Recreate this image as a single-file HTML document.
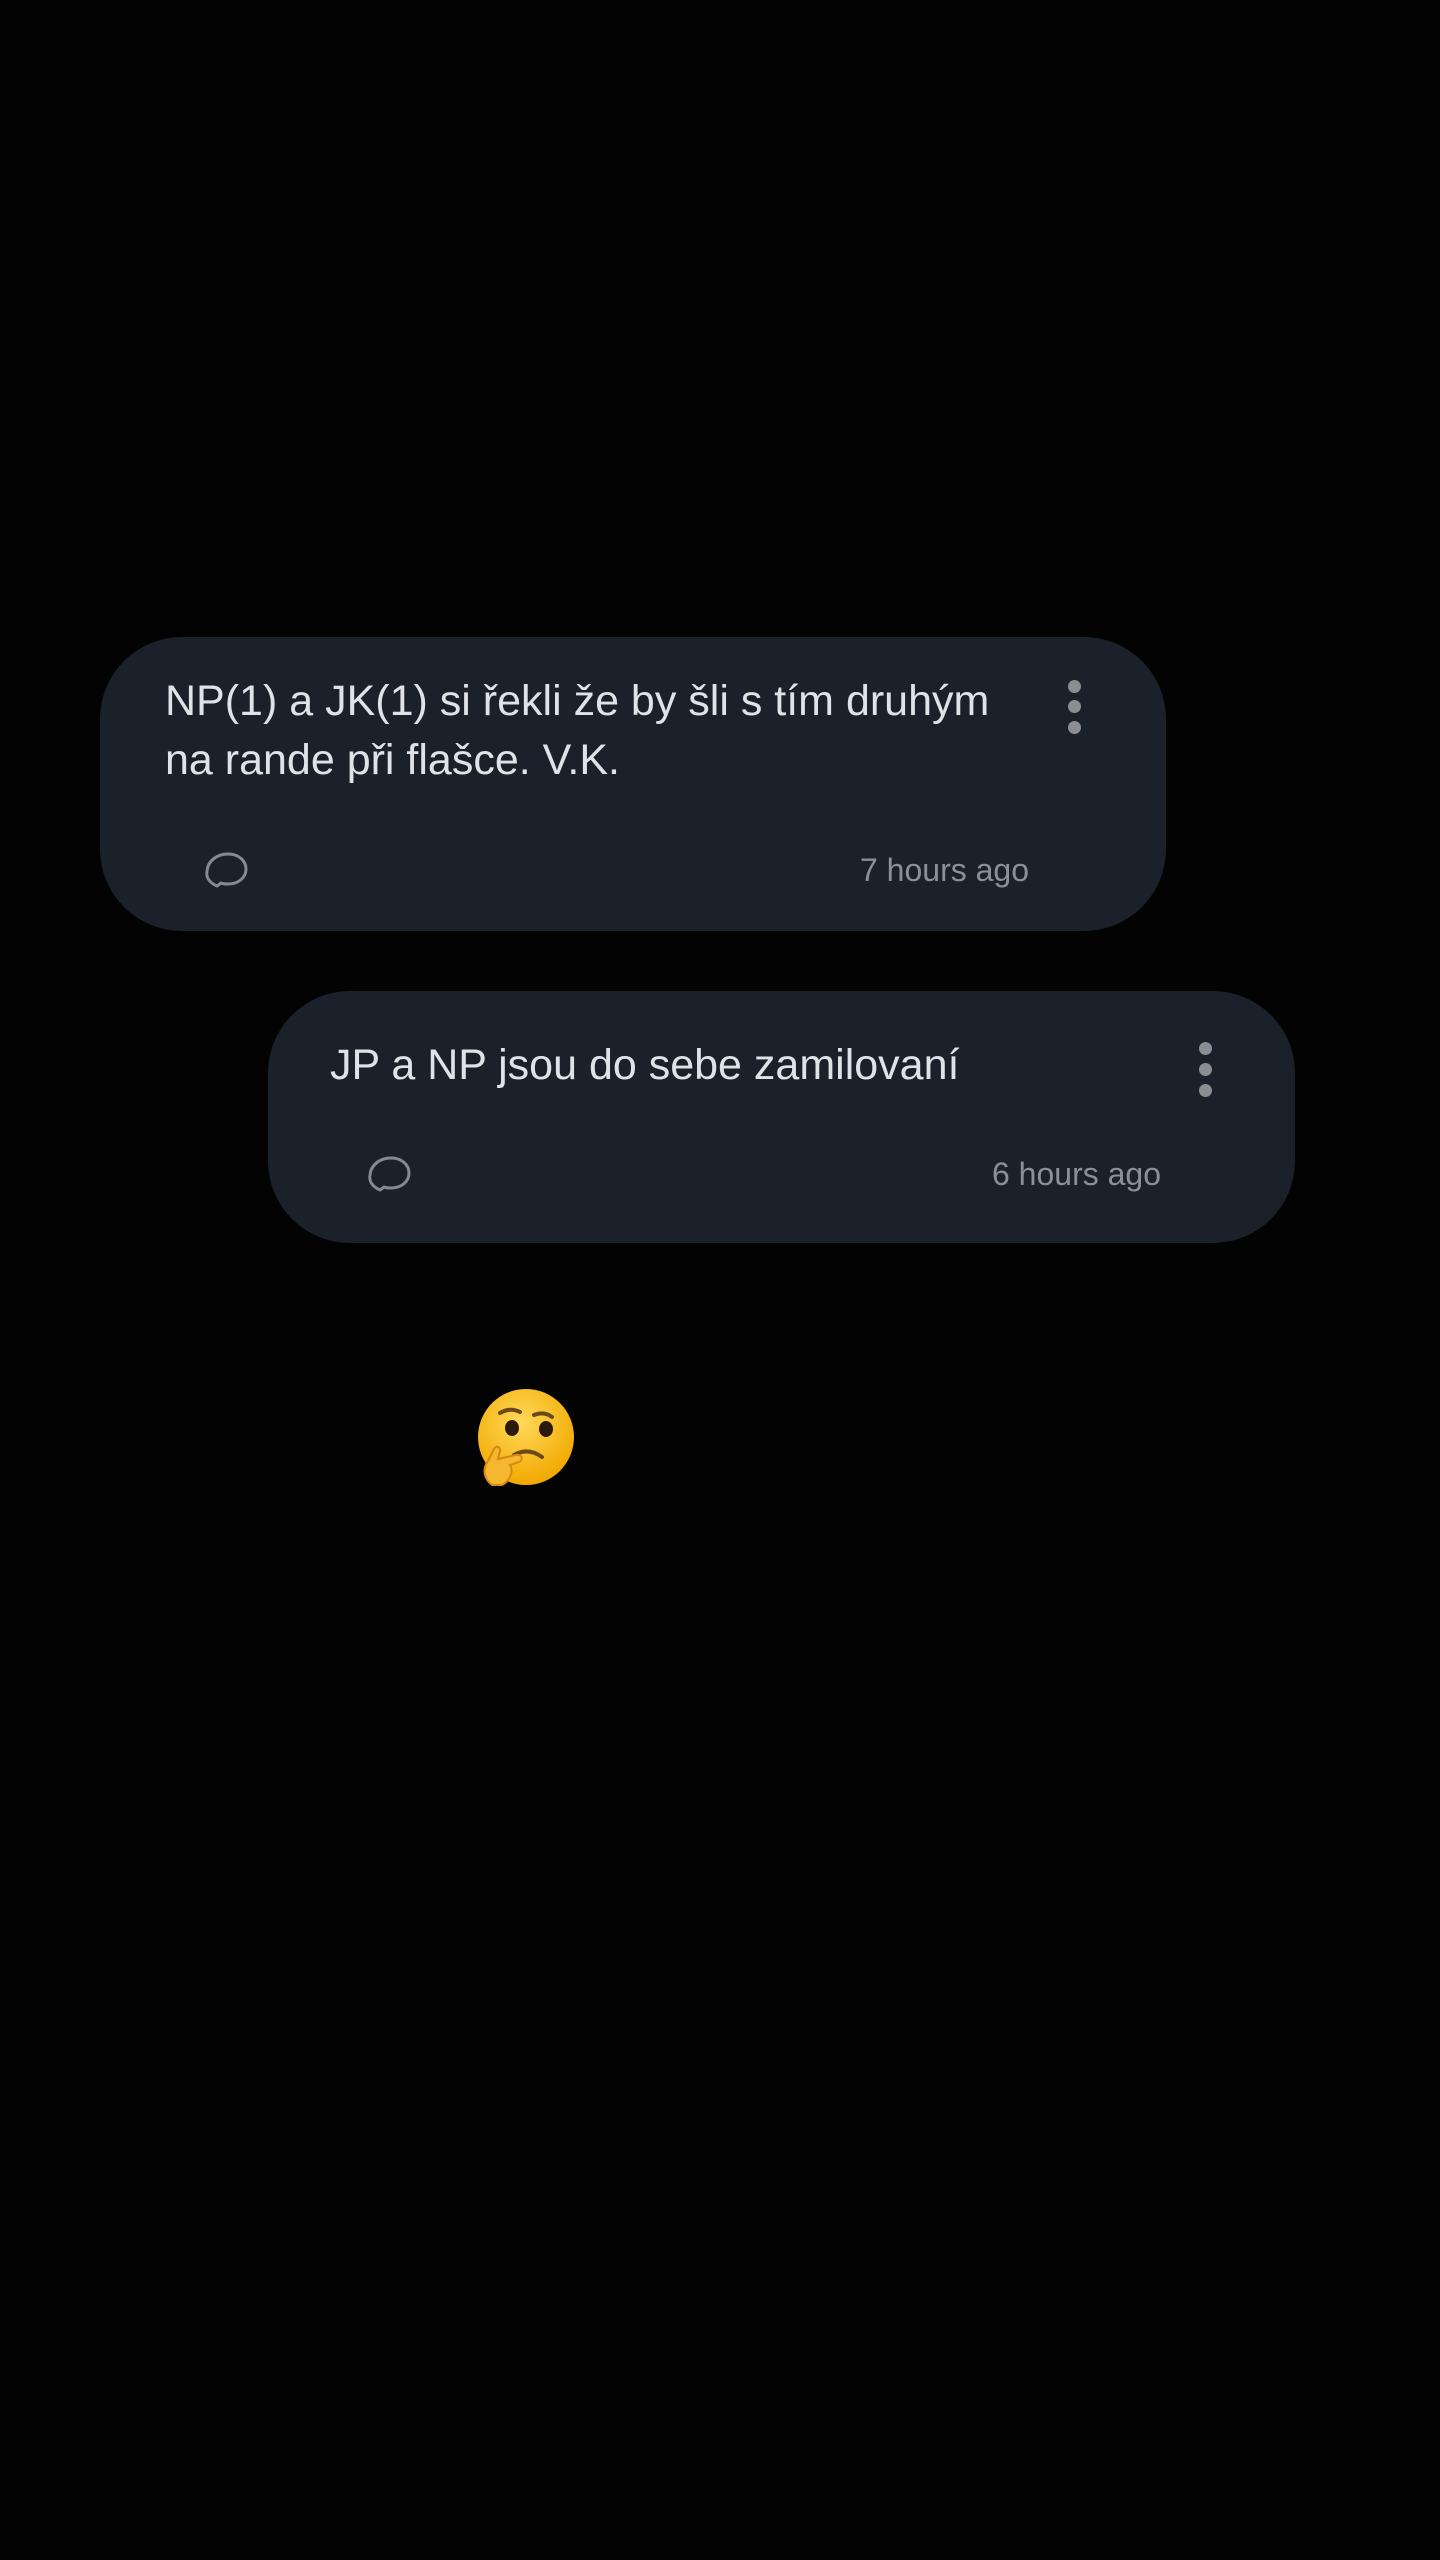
<!DOCTYPE html>
<html><head><meta charset="utf-8">
<style>
html,body{margin:0;padding:0;background:#030303;}
body{width:1440px;height:2560px;position:relative;overflow:hidden;font-family:"Liberation Sans",sans-serif;}
.card{position:absolute;background:#1b212b;border-radius:82px;}
.t{position:absolute;color:#dfe2e6;font-size:43px;white-space:nowrap;line-height:59px;}
.time{position:absolute;color:#8b9096;font-size:32px;white-space:nowrap;}
.dot{position:absolute;width:13px;height:13px;border-radius:50%;background:#8a8e93;}
svg.c{position:absolute;}
</style></head><body>
<div class="card" style="left:100px;top:637px;width:1066px;height:294px;"></div>
<div class="t" style="left:165px;top:672px;">NP(1) a JK(1) si řekli že by šli s tím druhým<br>na rande při flašce. V.K.</div>
<div class="dot" style="left:1068px;top:680px;"></div>
<div class="dot" style="left:1068px;top:700px;"></div>
<div class="dot" style="left:1068px;top:721px;"></div>
<svg class="c" style="left:200px;top:845px" width="56" height="50" viewBox="0 0 56 50"><path d="M17 41 C8 37 6 31 7 26 C8 15 18 9 28 9 C39 9 46 16 46 24 C46 33 38 39 28 39 C25 39 23 39 21 38 Z" fill="none" stroke="#858a90" stroke-width="3" stroke-linejoin="round"/></svg>
<div class="time" style="right:411px;top:852px;">7 hours ago</div>

<div class="card" style="left:268px;top:991px;width:1027px;height:252px;"></div>
<div class="t" style="left:330px;top:1036px;">JP a NP jsou do sebe zamilovaní</div>
<div class="dot" style="left:1199px;top:1042px;"></div>
<div class="dot" style="left:1199px;top:1063px;"></div>
<div class="dot" style="left:1199px;top:1084px;"></div>
<svg class="c" style="left:363px;top:1149px" width="56" height="50" viewBox="0 0 56 50"><path d="M17 41 C8 37 6 31 7 26 C8 15 18 9 28 9 C39 9 46 16 46 24 C46 33 38 39 28 39 C25 39 23 39 21 38 Z" fill="none" stroke="#858a90" stroke-width="3" stroke-linejoin="round"/></svg>
<div class="time" style="right:279px;top:1156px;">6 hours ago</div>

<svg style="position:absolute;left:470px;top:1385px" width="106" height="106" viewBox="0 0 106 106">
<defs><radialGradient id="g" cx="45%" cy="35%" r="65%"><stop offset="0" stop-color="#ffd95a"/><stop offset="1" stop-color="#f2a900"/></radialGradient></defs>
<circle cx="56" cy="52" r="48" fill="url(#g)"/>
<path d="M30 28 Q40 22 50 27" fill="none" stroke="#6b4a1a" stroke-width="4" stroke-linecap="round"/>
<path d="M64 30 Q74 26 82 32" fill="none" stroke="#6b4a1a" stroke-width="4" stroke-linecap="round"/>
<ellipse cx="42" cy="43" rx="7" ry="8" fill="#2a1a0a"/>
<ellipse cx="76" cy="44" rx="7" ry="8" fill="#2a1a0a"/>
<path d="M44 70 Q58 62 72 72" fill="none" stroke="#6b4a1a" stroke-width="4" stroke-linecap="round"/>
<path d="M22 100 C14 94 12 84 18 76 L24 64 C26 60 31 62 30 66 L28 74 L46 70 C52 69 54 75 49 77 L40 80 C44 86 40 96 32 100 Z" fill="#f5b630" stroke="#d58a10" stroke-width="2"/>
</svg>
</body></html>
